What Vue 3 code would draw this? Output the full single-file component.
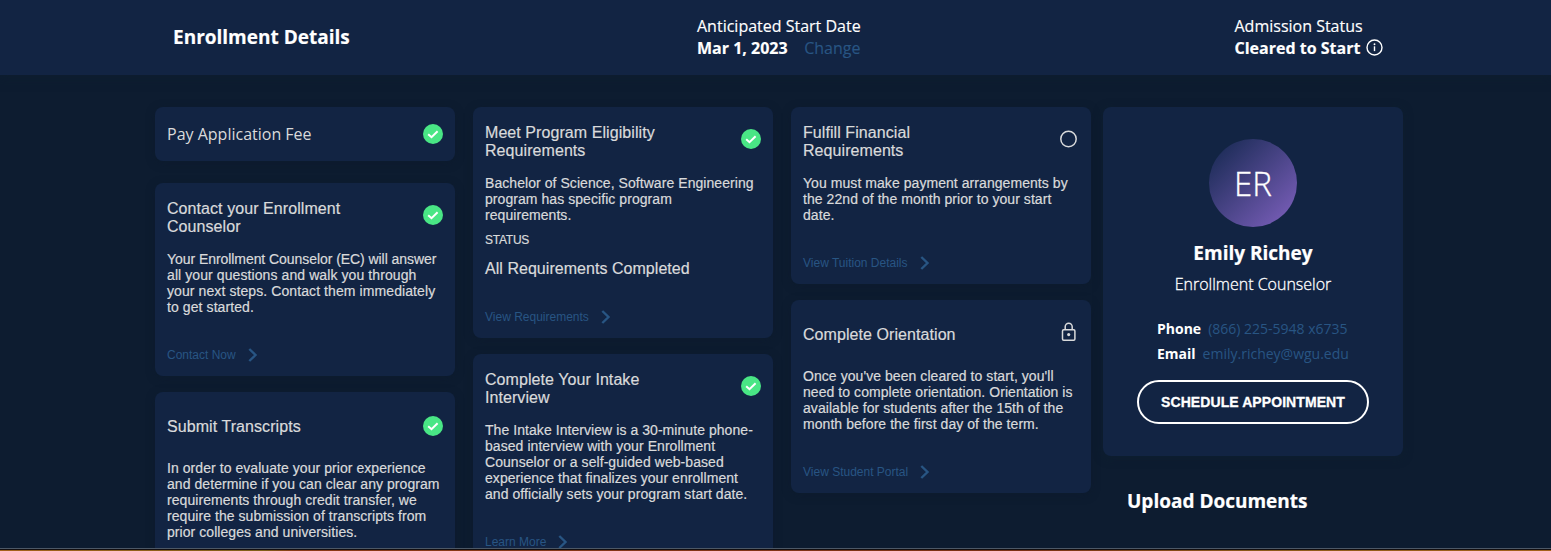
<script setup>
const columns = [
  [
    { title: ['Pay Application Fee'], icon: 'check', compact: true },
    {
      title: ['Contact your Enrollment', 'Counselor'],
      icon: 'check',
      body: ['Your Enrollment Counselor (EC) will answer', 'all your questions and walk you through', 'your next steps. Contact them immediately', 'to get started.'],
      tight: true,
      link: 'Contact Now',
    },
    {
      title: ['Submit Transcripts'],
      icon: 'check',
      lower: true,
      tall: true,
      body: ['In order to evaluate your prior experience', 'and determine if you can clear any program', 'requirements through credit transfer, we', 'require the submission of transcripts from', 'prior colleges and universities.'],
    },
  ],
  [
    {
      title: ['Meet Program Eligibility', 'Requirements'],
      icon: 'check',
      body: ['Bachelor of Science, Software Engineering', 'program has specific program', 'requirements.'],
      status: 'All Requirements Completed',
      link: 'View Requirements',
    },
    {
      title: ['Complete Your Intake', 'Interview'],
      icon: 'check',
      body: ['The Intake Interview is a 30-minute phone-', 'based interview with your Enrollment', 'Counselor or a self-guided web-based', 'experience that finalizes your enrollment', 'and officially sets your program start date.'],
      link: 'Learn More',
    },
  ],
  [
    {
      title: ['Fulfill Financial', 'Requirements'],
      icon: 'circle',
      body: ['You must make payment arrangements by', 'the 22nd of the month prior to your start', 'date.'],
      link: 'View Tuition Details',
    },
    {
      title: ['Complete Orientation'],
      icon: 'lock',
      body: ["Once you've been cleared to start, you'll", 'need to complete orientation. Orientation is', 'available for students after the 15th of the', 'month before the first day of the term.'],
      link: 'View Student Portal',
    },
  ],
]
</script>

<template>
  <div class="page">
    <header class="bar">
      <h1>Enrollment Details</h1>
      <div class="start">
        <div>Anticipated Start Date</div>
        <div class="row"><b>Mar 1, 2023</b><a class="change">Change</a></div>
      </div>
      <div class="admission">
        <div>Admission Status</div>
        <div class="row">
          <b>Cleared to Start</b>
          <svg class="info" width="17" height="17" viewBox="0 0 17 17">
            <circle cx="8.5" cy="8.5" r="7.5" fill="none" stroke="#fff" stroke-width="1.4" />
            <rect x="7.8" y="7.3" width="1.4" height="4.8" fill="#fff" />
            <circle cx="8.5" cy="5.2" r="0.95" fill="#fff" />
          </svg>
        </div>
      </div>
    </header>

    <main class="board">
      <section v-for="(cards, c) in columns" :key="c" class="column">
        <article v-for="card in cards" :key="card.title[0]" class="card" :class="{ compact: card.compact, tall: card.tall }">
          <div class="head">
            <h2><span v-for="t in card.title" :key="t">{{ t }}</span></h2>
            <svg v-if="card.icon === 'check'" class="mark" :class="{ lower: card.lower }" width="20" height="20" viewBox="0 0 20 20">
              <circle cx="10" cy="10" r="10" fill="#49e685" />
              <path d="M5.2 10.2 L8.5 13.2 L14.6 7.2" fill="none" stroke="#fff" stroke-width="2" />
            </svg>
            <svg v-else-if="card.icon === 'circle'" class="mark" width="20" height="20" viewBox="0 0 20 20">
              <circle cx="9.5" cy="10" r="7.7" fill="none" stroke="#d9dadb" stroke-width="1.5" />
            </svg>
            <svg v-else class="mark" width="20" height="20" viewBox="0 0 20 20">
              <rect x="3.5" y="7.8" width="12.4" height="10.4" rx="1.2" fill="none" stroke="#d9dadb" stroke-width="1.5" />
              <path d="M6.2 7.8 V4.7 A3.5 3.5 0 0 1 13.2 4.7 V7.8" fill="none" stroke="#d9dadb" stroke-width="1.5" />
              <circle cx="9.7" cy="12.6" r="1.6" fill="#d9dadb" />
            </svg>
          </div>
          <p v-if="card.body" class="text" :class="{ tight: card.tight }"><span v-for="l in card.body" :key="l">{{ l }}</span></p>
          <div v-if="card.status" class="status">
            <span class="label">STATUS</span>
            <span class="value">{{ card.status }}</span>
          </div>
          <a v-if="card.link" class="link">
            {{ card.link }}
            <svg width="10" height="14" viewBox="0 0 10 14">
              <path d="M1.3 1 L7.5 7 L1.3 13" fill="none" stroke="#285583" stroke-width="2.4" />
            </svg>
          </a>
        </article>
      </section>

      <aside class="side">
        <div class="person">
          <div class="avatar"><span>ER</span></div>
          <div class="name">Emily Richey</div>
          <div class="role"><span>Enrollment Counselor</span></div>
          <dl>
            <div><dt>Phone</dt><dd>(866) 225-5948 x6735</dd></div>
            <div><dt>Email</dt><dd>emily.richey@wgu.edu</dd></div>
          </dl>
          <button>SCHEDULE APPOINTMENT</button>
        </div>
        <h3>Upload Documents</h3>
      </aside>
    </main>
    <div class="edge"></div>
  </div>
</template>

<style>
body { background: #0d1c30; overflow: hidden; }
</style>

<style scoped>
* { box-sizing: border-box; margin: 0; }
.page {
  position: relative;
  height: 551px;
  overflow: hidden;
  background: #0d1c30;
  color: #fff;
  font-family: "Open Sans", sans-serif;
  white-space: nowrap;
}
.bar {
  display: grid;
  grid-template-columns: 524px 537.5px 1fr;
  height: 75px;
  padding-left: 173px;
  background: #122443;
  box-shadow: 0 2px 10px rgba(14, 31, 46, 0.5);
  font-size: 16px;
  line-height: 22px;
  -webkit-text-stroke: 0.15px;
}
.bar h1 { font-size: 19px; font-weight: 700; line-height: 26px; padding-top: 24px; }
.start, .admission { padding-top: 15px; }
.row { display: flex; }
.change { margin-left: 16.5px; color: #285583; }
.info { margin: 2px 0 0 6px; }
.board { display: flex; padding: 32px 0 0 155px; }
.column { width: 318px; display: flex; flex-direction: column; align-items: flex-start; gap: 16px; }
.column:nth-child(3) { width: 312px; }
.card {
  width: 300px;
  padding: 0 12px;
  border-radius: 8px;
  background: #122443;
  color: #d9dadb;
  font-family: "Liberation Sans", Arial, sans-serif;
  box-shadow: 0 2px 10px rgba(12, 26, 43, 0.4);
  -webkit-text-stroke: 0.2px;
}
.head { display: flex; justify-content: space-between; height: 68px; padding: 17px 0 15px; align-items: center; }
.head h2 { font-size: 16px; font-weight: 400; line-height: 18px; letter-spacing: 0.07px; }
.head h2 span, .text span { display: block; }
.mark { flex: none; margin-bottom: 6px; }
.mark.lower { margin-bottom: 2px; }
.compact { margin-bottom: 6px; }
.compact .head { height: 54px; padding: 0; }
.compact h2 { font-family: "Open Sans", sans-serif; letter-spacing: 0; -webkit-text-stroke: 0; }
.compact .mark { margin: 0; }
.tall { height: 225px; }
.text { font-size: 14px; line-height: 16px; letter-spacing: 0.06px; }
.tight span:first-child { letter-spacing: -0.06px; }
.tight span:nth-child(n + 2) { letter-spacing: 0.09px; }
.status { display: flex; flex-direction: column; height: 54px; padding-top: 9px; }
.label { font-size: 12px; line-height: 16px; letter-spacing: -0.25px; }
.value { font-size: 16px; line-height: 18px; margin-top: 12px; letter-spacing: 0.04px; }
.link { display: flex; align-items: center; gap: 12px; height: 61px; padding-top: 19px; color: #285583; font-size: 12px; -webkit-text-stroke: 0; }
.person {
  width: 300px;
  height: 349px;
  padding-top: 32px;
  border-radius: 8px;
  background: #122443;
  display: flex;
  flex-direction: column;
  align-items: center;
  box-shadow: 0 2px 10px rgba(14, 31, 46, 0.5);
}
.avatar {
  width: 88px;
  height: 88px;
  border-radius: 50%;
  background: linear-gradient(135deg, #152850 3%, #7d60bd 97%);
  font-size: 33px;
  font-weight: 300;
  line-height: 89px;
  text-align: center;
  -webkit-text-stroke: 0.3px;
}
.name { font-size: 19px; font-weight: 700; line-height: 26px; margin-top: 13px; -webkit-text-stroke: 0.2px; }
.role { font-size: 16px; font-weight: 300; line-height: 22px; margin-top: 7px; -webkit-text-stroke: 0.3px; }
dl { width: 192px; margin-top: 21px; font-size: 14px; line-height: 25px; }
dl div { display: flex; }
dt { font-weight: 700; }
dd { margin-left: 7px; color: #285583; }
button {
  width: 232px;
  height: 44px;
  margin-top: 14px;
  padding: 0;
  border: 2px solid #fff;
  border-radius: 22px;
  background: none;
  color: #fff;
  font: 700 14px "Liberation Sans", Arial, sans-serif;
  letter-spacing: 0.08px;
  -webkit-text-stroke: 0.3px;
}
.side h3 { margin: 32px 0 0 24px; font-size: 19px; font-weight: 700; line-height: 26px; -webkit-text-stroke: 0.2px; }
.edge {
  position: absolute;
  left: 0;
  right: 0;
  bottom: 0;
  height: 3px;
  background:
    linear-gradient(#4c5866, #4c5866) 0 0 / 100% 1px no-repeat,
    linear-gradient(#120e10, #120e10) 0 1px / 100% 1px no-repeat,
    linear-gradient(90deg, #a5621c, #80601a 17%, #8c3a18 19%, #7c3014 66%, #8c5a1a 81%, #a5621c);
}
</style>
